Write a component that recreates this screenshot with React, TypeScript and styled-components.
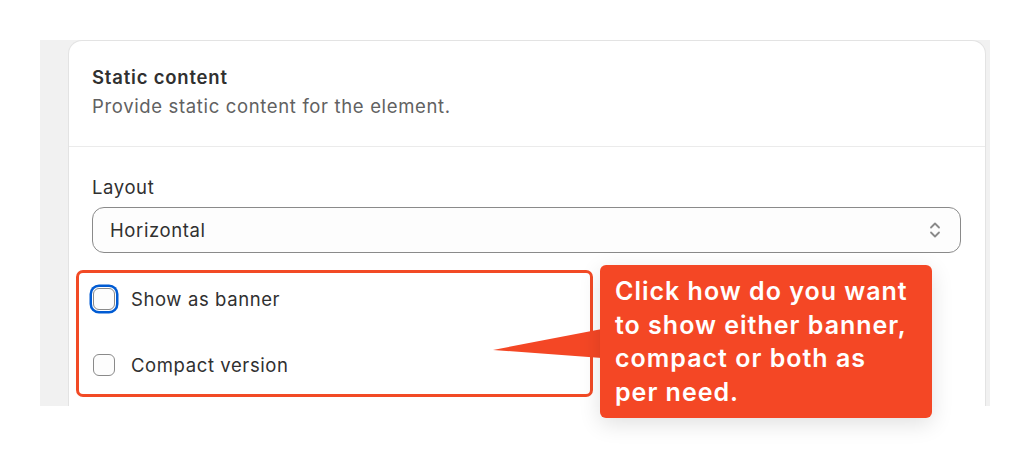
import styled, { createGlobalStyle } from "styled-components";

const GlobalStyle = createGlobalStyle`
  html, body {
    margin: 0;
    padding: 0;
    background: #ffffff;
  }
  body {
    font-family: Inter, "Noto Sans", sans-serif;
    -webkit-font-smoothing: antialiased;
  }
`;

const Page = styled.div`
  position: relative;
  width: 1030px;
  height: 459px;
  padding: 40px 40px 0 40px;
  box-sizing: border-box;
  overflow: hidden;
`;

const Frame = styled.div`
  background: #f1f1f1;
  height: 366px;
  padding: 0 4px 0 28px;
  box-sizing: border-box;
  overflow: hidden;
`;

const Card = styled.div`
  background: #ffffff;
  border: 1px solid #e3e3e3;
  border-bottom: none;
  border-radius: 14px 14px 0 0;
  height: 420px;
  box-sizing: border-box;
`;

const Header = styled.div`
  padding: 23px 24px 27px 23px;
  border-bottom: 1px solid #ebebeb;
`;

const Title = styled.h2`
  margin: 0;
  font-size: 18.5px;
  line-height: 26px;
  font-weight: 600;
  letter-spacing: 0.8px;
  color: #303030;
`;

const Description = styled.p`
  margin: 3px 0 0;
  font-size: 18.5px;
  line-height: 26px;
  letter-spacing: 0.65px;
  color: #616161;
`;

const Body = styled.div`
  padding: 27px 24px 0 23px;
  font-size: 18.5px;
  letter-spacing: 0.6px;
`;

const Label = styled.div`
  line-height: 26px;
  color: #303030;
  margin-bottom: 7px;
`;

const Select = styled.div`
  height: 46px;
  border: 1px solid #8a8a8a;
  border-radius: 12px;
  background: #fdfdfd;
  display: flex;
  align-items: center;
  justify-content: space-between;
  padding: 0 18px 0 17px;
  box-sizing: border-box;
  color: #303030;
`;

const Options = styled.div`
  display: flex;
  flex-direction: column;
  gap: 40px;
  padding: 33px 0 0 1px;
`;

const Option = styled.label`
  display: flex;
  align-items: center;
  gap: 16px;
  line-height: 26px;
  color: #303030;
`;

const Box = styled.span<{ $focused?: boolean }>`
  width: 22px;
  height: 22px;
  box-sizing: border-box;
  border: 1px solid #8a8a8a;
  border-radius: 6px;
  background: #fdfdfd;
  flex-shrink: 0;
  box-shadow: ${({ $focused }) =>
    $focused ? "0 0 0 1px #ffffff, 0 0 0 3.5px #005bd3" : "none"};
`;

const Highlight = styled.div`
  position: absolute;
  left: 76px;
  top: 270px;
  width: 517px;
  height: 127px;
  box-sizing: border-box;
  border: 3px solid #f24a25;
  border-radius: 7px;
  pointer-events: none;
`;

const Callout = styled.div`
  position: absolute;
  left: 600px;
  top: 265px;
  width: 332px;
  height: 153px;
  box-sizing: border-box;
  padding: 10px 20px 0 15px;
  background: #f44725;
  border-radius: 6px;
  box-shadow: 0 6px 22px rgba(0, 0, 0, 0.12);
  color: #ffffff;
  font-size: 25px;
  line-height: 33.5px;
  font-weight: 600;
  letter-spacing: 1px;
`;

const Pointer = styled.svg`
  position: absolute;
  left: 492px;
  top: 328px;
`;

function Chevrons() {
  return (
    <svg width="14" height="20" viewBox="0 0 14 20" fill="none">
      <path
        d="M3 7.5 L7 3.5 L11 7.5"
        stroke="#8a8a8a"
        strokeWidth="1.8"
        strokeLinecap="round"
        strokeLinejoin="round"
      />
      <path
        d="M3 12.5 L7 16.5 L11 12.5"
        stroke="#8a8a8a"
        strokeWidth="1.8"
        strokeLinecap="round"
        strokeLinejoin="round"
      />
    </svg>
  );
}

export default function App() {
  return (
    <>
      <GlobalStyle />
      <Page>
        <Frame>
          <Card>
            <Header>
              <Title>Static content</Title>
              <Description>Provide static content for the element.</Description>
            </Header>
            <Body>
              <Label>Layout</Label>
              <Select>
                <span>Horizontal</span>
                <Chevrons />
              </Select>
              <Options>
                <Option>
                  <Box $focused />
                  Show as banner
                </Option>
                <Option>
                  <Box />
                  Compact version
                </Option>
              </Options>
            </Body>
          </Card>
        </Frame>
        <Highlight />
        <Pointer width="110" height="32" viewBox="0 0 110 32">
          <polygon points="1,22 110,1 110,30" fill="#f44725" />
        </Pointer>
        <Callout>
          Click how do you want to show either banner, compact or both as per need.
        </Callout>
      </Page>
    </>
  );
}
